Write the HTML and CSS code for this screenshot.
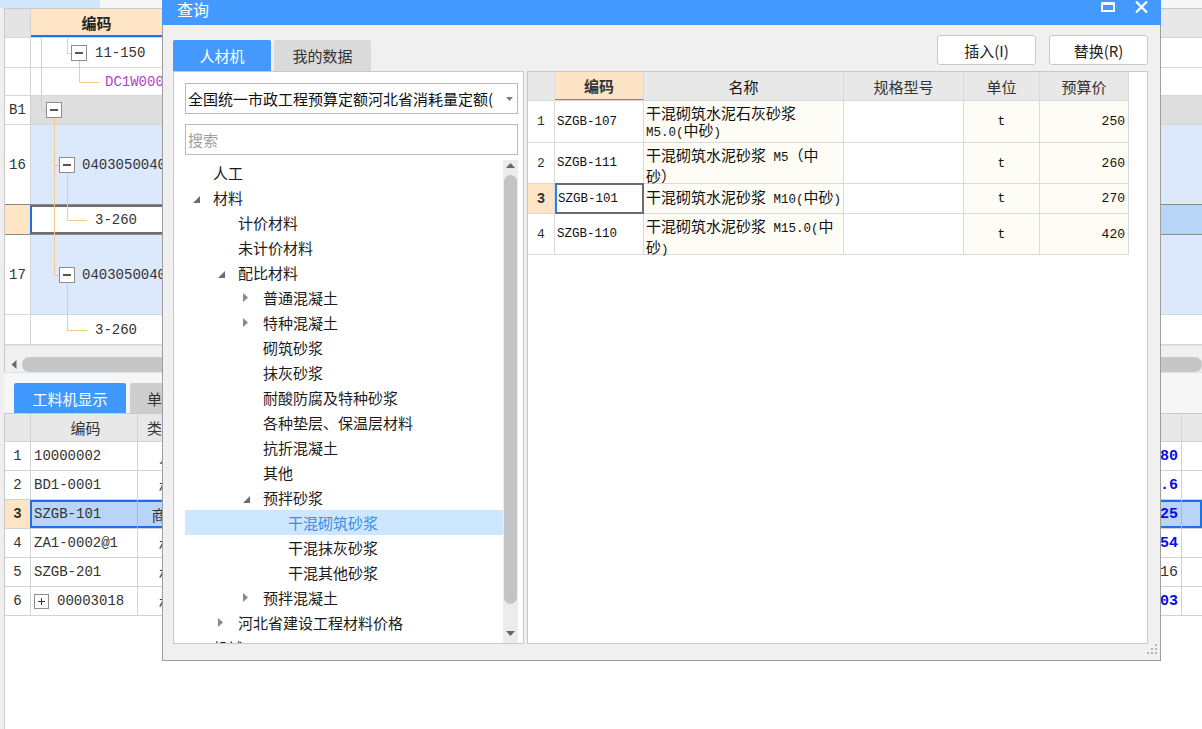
FILE: index.html
```html
<!DOCTYPE html>
<html lang="zh-CN">
<head>
<meta charset="utf-8">
<title>查询</title>
<link rel="stylesheet" href="styles.css">
</head>
<body>
<div class="app">
  <div class="topstrip"><div class="tt"></div></div>
  <div class="g1">
    <div class="r hd"><div class="rn"></div><div class="c"><div class="hcode">编码</div></div></div>
    <div class="r h30"><div class="rn"></div><div class="c p40"><span class="bx"></span><span class="tx">11-150</span></div></div>
    <div class="r h28"><div class="rn"></div><div class="c p74"><span class="tx pur">DC1W0001</span></div></div>
    <div class="r h29 grey"><div class="rn">B1</div><div class="c p15"><span class="bx"></span></div></div>
    <div class="r h80 blue"><div class="rn">16</div><div class="c p28"><span class="bx"></span><span class="tx t7">040305004001</span></div></div>
    <div class="r h30 sel"><div class="rn"></div><div class="c"><div class="cur"><span class="tx">3-260</span></div></div></div>
    <div class="r h80 blue"><div class="rn">17</div><div class="c p28"><span class="bx"></span><span class="tx t7">040305004002</span></div></div>
    <div class="r h30"><div class="rn"></div><div class="c p64"><span class="tx">3-260</span></div></div>
    <svg class="lines" width="200" height="340" viewBox="0 0 200 340">
      <path d="M37.5 30V102.5H42M63.5 30V45.5H67M75.5 53V74.5H95M50.5 110V267.5M50.5 157.5H55M50.5 267.5H55M63.5 165V212.5H83M63.5 275V322.5H83" fill="none" stroke="#fbc987" stroke-width="1"/>
    </svg>
  </div>
  <div class="hs">
    <span class="harr"><svg width="6" height="9" viewBox="0 0 6 9"><path d="M5.5 0L0.5 4.5L5.5 9Z" fill="#6a6a6a"/></svg></span>
    <span class="thumb"></span>
  </div>
  <div class="tabs2"><div class="t2 on">工料机显示</div><div class="t2">单价构成</div></div>
  <div class="g2">
    <div class="r2 hd2"><div class="rn"></div><div class="cells"><div class="k code cen">编码</div><div class="k typ hl">类别</div><div class="k fill"></div><div class="k num"></div><div class="k last"></div></div></div>
    <div class="r2"><div class="rn">1</div><div class="cells"><div class="k code">10000002</div><div class="k typ">人</div><div class="k fill"></div><div class="k num bl">114.80</div><div class="k last"></div></div></div>
    <div class="r2"><div class="rn">2</div><div class="cells"><div class="k code">BD1-0001</div><div class="k typ">材</div><div class="k fill"></div><div class="k num bl">33.6</div><div class="k last"></div></div></div>
    <div class="r2 s2"><div class="rn">3</div><div class="cells"><div class="k code">SZGB-101</div><div class="k typ">商砼</div><div class="k fill"></div><div class="k num bl">270.25</div><div class="k last"></div></div></div>
    <div class="r2"><div class="rn">4</div><div class="cells"><div class="k code">ZA1-0002@1</div><div class="k typ">材</div><div class="k fill"></div><div class="k num bl">1.54</div><div class="k last"></div></div></div>
    <div class="r2"><div class="rn">5</div><div class="cells"><div class="k code">SZGB-201</div><div class="k typ">材</div><div class="k fill"></div><div class="k num">0.16</div><div class="k last"></div></div></div>
    <div class="r2"><div class="rn">6</div><div class="cells"><div class="k code"><span class="bx plus"></span><span class="tx t9">00003018</span></div><div class="k typ">材</div><div class="k fill"></div><div class="k num bl">12.03</div><div class="k last"></div></div></div>
  </div>
  <div class="rest"></div>
</div>

<div class="dlg">
  <div class="dtitle">
    <span class="dtxt">查询</span>
    <span class="dctl">
      <svg class="imax" width="14" height="10" viewBox="0 0 14 10"><rect x="1" y="1.5" width="12" height="7.5" fill="none" stroke="#fff" stroke-width="2"/><rect x="1" y="0" width="12" height="3" fill="#fff"/></svg>
      <svg class="iclose" width="13" height="12" viewBox="0 0 13 12"><path d="M1 0.5L12 11.5M12 0.5L1 11.5" stroke="#fff" stroke-width="2.2"/></svg>
    </span>
  </div>
  <div class="dtop">
    <div class="dtabs"><div class="dtab on">人材机</div><div class="dtab">我的数据</div></div>
    <div class="dbtns"><button class="btn">插入(I)</button><button class="btn">替换(R)</button></div>
  </div>
  <div class="panes">
    <div class="lp">
      <div class="combo"><span class="ctext">全国统一市政工程预算定额河北省消耗量定额(</span><svg class="caret" width="7" height="4" viewBox="0 0 7 4"><path d="M0 0H7L3.5 4Z" fill="#7a7a7a"/></svg></div>
      <div class="search">搜索</div>
      <div class="tw">
        <div class="tree">
          <div class="ti l0"><i class="ar"></i><span>人工</span></div>
          <div class="ti l0"><i class="ar"><svg class="ex" width="7" height="7" viewBox="0 0 7 7"><path d="M7 0V7H0Z" fill="#6d6d6d"/></svg></i><span>材料</span></div>
          <div class="ti l1"><i class="ar"></i><span>计价材料</span></div>
          <div class="ti l1"><i class="ar"></i><span>未计价材料</span></div>
          <div class="ti l1"><i class="ar"><svg class="ex" width="7" height="7" viewBox="0 0 7 7"><path d="M7 0V7H0Z" fill="#6d6d6d"/></svg></i><span>配比材料</span></div>
          <div class="ti l2"><i class="ar"><svg width="5" height="9" viewBox="0 0 5 9"><path d="M0 0L5 4.5L0 9Z" fill="#8a8a8a"/></svg></i><span>普通混凝土</span></div>
          <div class="ti l2"><i class="ar"><svg width="5" height="9" viewBox="0 0 5 9"><path d="M0 0L5 4.5L0 9Z" fill="#8a8a8a"/></svg></i><span>特种混凝土</span></div>
          <div class="ti l2"><i class="ar"></i><span>砌筑砂浆</span></div>
          <div class="ti l2"><i class="ar"></i><span>抹灰砂浆</span></div>
          <div class="ti l2"><i class="ar"></i><span>耐酸防腐及特种砂浆</span></div>
          <div class="ti l2"><i class="ar"></i><span>各种垫层、保温层材料</span></div>
          <div class="ti l2"><i class="ar"></i><span>抗折混凝土</span></div>
          <div class="ti l2"><i class="ar"></i><span>其他</span></div>
          <div class="ti l2"><i class="ar"><svg class="ex" width="7" height="7" viewBox="0 0 7 7"><path d="M7 0V7H0Z" fill="#6d6d6d"/></svg></i><span>预拌砂浆</span></div>
          <div class="ti l3 on"><i class="ar"></i><span>干混砌筑砂浆</span></div>
          <div class="ti l3"><i class="ar"></i><span>干混抹灰砂浆</span></div>
          <div class="ti l3"><i class="ar"></i><span>干混其他砂浆</span></div>
          <div class="ti l2"><i class="ar"><svg width="5" height="9" viewBox="0 0 5 9"><path d="M0 0L5 4.5L0 9Z" fill="#8a8a8a"/></svg></i><span>预拌混凝土</span></div>
          <div class="ti l1"><i class="ar"><svg width="5" height="9" viewBox="0 0 5 9"><path d="M0 0L5 4.5L0 9Z" fill="#8a8a8a"/></svg></i><span>河北省建设工程材料价格</span></div>
          <div class="ti l0"><i class="ar"><svg width="5" height="9" viewBox="0 0 5 9"><path d="M0 0L5 4.5L0 9Z" fill="#8a8a8a"/></svg></i><span>机械</span></div>
        </div>
        <div class="vs">
          <svg class="vup" width="9" height="5" viewBox="0 0 9 5"><path d="M0 5H9L4.5 0Z" fill="#666"/></svg>
          <div class="vthumb"></div>
          <svg class="vdn" width="9" height="5" viewBox="0 0 9 5"><path d="M0 0H9L4.5 5Z" fill="#666"/></svg>
        </div>
      </div>
    </div>
    <div class="rp">
      <div class="tbl">
        <div class="tr th"><div class="td rn"></div><div class="td cd hk">编码</div><div class="td nm cen">名称</div><div class="td sp">规格型号</div><div class="td un">单位</div><div class="td pr">预算价</div></div>
        <div class="tr h42"><div class="td rn">1</div><div class="td cd">SZGB-107</div><div class="td nm">干混砌筑水泥石灰砂浆<br><span class="m">M5.0(</span>中砂<span class="m">)</span></div><div class="td sp"></div><div class="td un">t</div><div class="td pr">250</div></div>
        <div class="tr h41"><div class="td rn">2</div><div class="td cd">SZGB-111</div><div class="td nm">干混砌筑水泥砂浆<span class="m"> M5</span>（中<br>砂）</div><div class="td sp"></div><div class="td un">t</div><div class="td pr">260</div></div>
        <div class="tr h30 cur3"><div class="td rn">3</div><div class="td cd selc">SZGB-101</div><div class="td nm">干混砌筑水泥砂浆<span class="m"> M10(</span>中砂<span class="m">)</span></div><div class="td sp"></div><div class="td un">t</div><div class="td pr">270</div></div>
        <div class="tr h41"><div class="td rn">4</div><div class="td cd">SZGB-110</div><div class="td nm">干混砌筑水泥砂浆<span class="m"> M15.0(</span>中<br>砂<span class="m">)</span></div><div class="td sp"></div><div class="td un">t</div><div class="td pr">420</div></div>
      </div>
    </div>
  </div>
  <div class="dfoot">
    <svg width="10" height="10" viewBox="0 0 10 10"><g fill="#b2b2b2"><rect x="8" y="0" width="2" height="2"/><rect x="4" y="4" width="2" height="2"/><rect x="8" y="4" width="2" height="2"/><rect x="0" y="8" width="2" height="2"/><rect x="4" y="8" width="2" height="2"/><rect x="8" y="8" width="2" height="2"/></g></svg>
  </div>
</div>
</body>
</html>
```

FILE: styles.css
```css
* { box-sizing: border-box; margin: 0; padding: 0; }
html, body { width: 1202px; height: 729px; overflow: hidden; }
body {
  background: #fff;
  font-family: "Noto Sans CJK SC", "Noto Sans", sans-serif;
  font-size: 15px;
  color: #222;
  position: relative;
}

/* ---------- background application ---------- */
.app {
  display: flex;
  flex-direction: column;
  height: 729px;
  padding-left: 4px;
  background: #efefef;
}
.topstrip { height: 8px; margin-left: -4px; background: #f7f7f7; display: flex; }
.topstrip .tt { width: 100px; background: #cfe6fb; }

.g1 {
  position: relative;
  background: #fff;
  border-left: 1px solid #c9c9c9;
  border-top: 1px solid #c9c9c9;
}
.r { display: flex; border-bottom: 1px solid #d6d6d6; }
.rn {
  width: 26px;
  flex: none;
  border-right: 1px solid #d2d2d2;
  display: flex;
  align-items: center;
  justify-content: center;
  font-family: "Liberation Mono", monospace;
  font-size: 14px;
  color: #333;
  background: #fff;
}
.r .c { flex: 1; display: flex; align-items: center; min-width: 0; }
.hd { height: 29px; background: #e6e6e6; }
.hd .rn { background: #e4e4e4; }
.hd .c { align-items: stretch; background: #e8e8e8; }
.hcode {
  width: 131px;
  background: #fde5c6;
  border-bottom: 2px solid #1a73e8;
  display: flex;
  align-items: center;
  justify-content: center;
  font-weight: bold;
  font-size: 15px;
  color: #222;
}
.h30 { height: 30px; }
.h28 { height: 28px; }
.h29 { height: 29px; }
.h80 { height: 80px; }
.grey .c { background: #dedede; }
.blue .c { background: #dce8fb; }
.sel { border-top: 1px solid #8a8a8a; border-bottom: 1px solid #8a8a8a; margin-top: -1px; height: 31px; }
.sel .rn { background: #fde5c5; }
.sel .c { background: #b7d6f7; align-items: stretch; }
.cur {
  width: 300px;
  margin-left: -1px;
  background: #fff;
  border: 2px solid #6e6e6e;
  border-left: 2px solid #1a6fe0;
  display: flex;
  align-items: center;
  padding-left: 63px;
}
.p40 { padding-left: 40px; }
.p74 { padding-left: 74px; }
.p15 { padding-left: 15px; }
.p28 { padding-left: 28px; }
.p64 { padding-left: 64px; }
.bx {
  width: 16px;
  height: 16px;
  flex: none;
  border: 1px solid #8e8e8e;
  background: #fff;
  position: relative;
  display: inline-block;
}
.bx::before {
  content: "";
  position: absolute;
  left: 3px;
  top: 6px;
  width: 8px;
  height: 2px;
  background: #555;
}
.bx.plus { width: 15px; height: 15px; }
.bx.plus::before { left: 3px; top: 6px; width: 7px; height: 1px; background: #333; }
.bx.plus::after {
  content: "";
  position: absolute;
  left: 6px;
  top: 3px;
  width: 1px;
  height: 7px;
  background: #333;
}
.tx {
  margin-left: 8px;
  font-family: "Liberation Mono", monospace;
  font-size: 14px;
  color: #333;
  white-space: nowrap;
}
.p74 .tx, .cur .tx, .p64 .tx { margin-left: 0; }
.tx.t7 { margin-left: 7px; }
.tx.t9 { margin-left: 8px; }
.pur { color: #b23fc6; }
.lines { position: absolute; left: -1px; top: -1px; pointer-events: none; }

.hs {
  height: 27px;
  background: #f0f0f0;
  border-left: 1px solid #c9c9c9;
  border-top: 1px solid #e2e2e2;
  padding-top: 11px;
  display: flex;
}
.harr { width: 17px; height: 15px; display: flex; align-items: center; justify-content: center; }
.thumb { flex: 1; height: 15px; background: #c6c6c6; border-radius: 7px; }

.tabs2 {
  height: 41px;
  background: #f6f6f6;
  padding: 10px 0 0 10px;
  display: flex;
  gap: 4px;
  border-top: 1px solid #e0e0e0;
}
.t2 {
  width: 94px;
  height: 30px;
  background: #cdcdcd;
  border-radius: 2px 2px 0 0;
  display: flex;
  align-items: center;
  justify-content: center;
  font-size: 15px;
  color: #333;
}
.t2.on { width: 112px; background: #3f98fd; color: #fff; }

.g2 { background: #fff; border-left: 1px solid #c9c9c9; border-top: 1px solid #c9c9c9; }
.r2 { display: flex; height: 29px; border-bottom: 1px solid #d2d2d2; }
.hd2 { height: 28px; background: #e8e8e8; }
.hd2 .rn { background: #e8e8e8; }
.cells { flex: 1; display: flex; min-width: 0; }
.k {
  border-right: 1px solid #d2d2d2;
  display: flex;
  align-items: center;
  font-family: "Liberation Mono", "Noto Sans CJK SC", monospace;
  font-size: 14px;
  color: #333;
  white-space: nowrap;
  overflow: hidden;
}
.hd2 .k { font-family: "Noto Sans CJK SC", sans-serif; font-size: 15px; justify-content: center; }
.k.code { width: 107px; flex: none; padding-left: 3px; }
.k.code .tx { margin-left: 8px; }
.k.typ {
  width: 58px;
  flex: none;
  justify-content: center;
  font-family: "Noto Sans CJK SC", sans-serif;
  font-size: 15px;
}
.hd2 .k.typ.hl { justify-content: flex-start; padding-left: 9px; }
.k.fill { flex: 1; }
.k.num { width: 60px; flex: none; justify-content: flex-end; padding-right: 3px; font-size: 15px; }
.k.num.bl { color: #0b0be8; font-weight: bold; }
.k.last { width: 20px; flex: none; border-right: none; }
.s2 .rn { background: #fde5c5; font-weight: bold; }
.s2 .cells {
  background: #b6d5f7;
  margin-left: -1px;
  box-shadow: inset 0 0 0 2px #1f6fe5;
  padding-left: 1px;
}
.s2 .k { border-right-color: #9fb9d6; }
.rest { flex: 1; background: #fff; border-left: 1px solid #d0d0d0; }

/* ---------- dialog ---------- */
.dlg {
  position: absolute;
  left: 162px;
  top: 0;
  width: 999px;
  height: 661px;
  background: #f0f0f0;
  border: 1px solid #9e9e9e;
  border-top: none;
  display: flex;
  flex-direction: column;
}
.dtitle {
  height: 25px;
  margin: 0 -1px;
  background: #4499ff;
  color: #fff;
  display: flex;
  align-items: flex-start;
  padding: 0 13px 0 15px;
}
.dtxt { font-size: 16px; line-height: 18px; }
.dctl { margin-left: auto; display: flex; align-items: flex-start; gap: 20px; padding-top: 1px; }
.imax { margin-top: 1px; }

.dtop {
  height: 46px;
  padding: 0 12px 0 10px;
  display: flex;
  justify-content: space-between;
}
.dtabs { align-self: flex-end; display: flex; gap: 3px; }
.dtab {
  width: 98px;
  height: 31px;
  background: #dadada;
  border-radius: 2px 2px 0 0;
  display: flex;
  align-items: center;
  justify-content: center;
  font-size: 15px;
  color: #333;
}
.dtab + .dtab { width: 97px; }
.dtab.on { background: #4499ff; color: #fff; }
.dbtns { margin-top: 10px; display: flex; gap: 13px; }
.btn {
  width: 99px;
  height: 30px;
  background: #fff;
  border: 1px solid #c9c9c9;
  border-radius: 3px;
  font-family: "Noto Sans CJK SC", sans-serif;
  font-size: 15px;
  color: #222;
}

.panes { height: 573px; display: flex; gap: 3px; padding: 0 12px 0 10px; }
.lp {
  width: 351px;
  flex: none;
  background: #fff;
  border: 1px solid #c9c9c9;
  padding: 11px 5px 0 11px;
  display: flex;
  flex-direction: column;
}
.combo {
  height: 31px;
  flex: none;
  border: 1px solid #b9b9b9;
  background: #fff;
  display: flex;
  align-items: center;
  padding-left: 2px;
}
.ctext { width: 308px; overflow: hidden; white-space: nowrap; font-size: 15px; color: #111; }
.caret { margin-left: 10px; }
.search {
  height: 31px;
  flex: none;
  margin-top: 10px;
  border: 1px solid #b9b9b9;
  display: flex;
  align-items: center;
  padding-left: 2px;
  color: #a0a0a0;
  font-size: 15px;
}
.tw { margin-top: 5px; flex: 1; min-height: 0; display: flex; overflow: hidden; }
.tree { flex: 1; overflow: hidden; }
.ti {
  height: 25px;
  display: flex;
  align-items: center;
  white-space: nowrap;
  font-size: 15px;
  color: #1c1c1c;
}
.ti .ar { width: 22px; flex: none; display: flex; align-items: center; padding-left: 2px; font-style: normal; }
.ti .ar .ex { margin-top: 4px; }
.l0 { padding-left: 6px; }
.l1 { padding-left: 31px; }
.l2 { padding-left: 56px; }
.l3 { padding-left: 81px; }
.ti.on { background: #cce7ff; color: #3a8ce6; }
.vs {
  width: 15px;
  flex: none;
  background: #ececec;
  display: flex;
  flex-direction: column;
  align-items: center;
}
.vup { margin-top: 3px; flex: none; }
.vthumb { width: 13px; flex: none; height: 429px; margin-top: 7px; background: #c3c3c3; border-radius: 7px; }
.vdn { margin-top: 27px; flex: none; }

.rp { flex: 1; background: #fff; border: 1px solid #c9c9c9; }
.tbl { width: 601px; }
.tr { display: flex; border-bottom: 1px solid #dadada; }
.th { height: 29px; background: #e8e8e8; }
.h42 { height: 42px; }
.h41 { height: 41px; }
.tr.h30 { height: 30px; }
.td {
  border-right: 1px solid #dadada;
  display: flex;
  align-items: center;
  justify-content: center;
  font-size: 15px;
  color: #333;
}
.td.rn {
  width: 27px;
  font-family: "Liberation Mono", monospace;
  font-size: 13px;
  background: #fff;
}
.th .td.rn { background: #e8e8e8; }
.td.cd {
  width: 89px;
  justify-content: flex-start;
  padding-left: 2px;
  font-family: "Liberation Mono", monospace;
  font-size: 12.5px;
  color: #111;
}
.th .td { font-family: "Noto Sans CJK SC", sans-serif; font-size: 15px; color: #333; justify-content: center; padding: 0; }
.td.hk { background: #fde4c4; font-weight: bold; border-bottom: 1px solid #4a90e2; }
.td.nm {
  width: 200px;
  display: block;
  align-self: stretch;
  padding: 2px 0 0 2px;
  line-height: 17px;
  background: #fdfdf6;
  color: #111;
}
.tr.h30 .td.nm { padding-top: 4px; }
.tr.h42 .td.nm { padding-top: 3px; }
.tr.h41 .td.nm { padding-top: 3px; }
.td.nm.cen { display: flex; background: #e8e8e8; padding: 0; }
.td.sp { width: 120px; }
.td.un {
  width: 76px;
  background: #fdfdf6;
  font-family: "Liberation Mono", monospace;
  font-size: 13px;
  color: #111;
}
.td.pr {
  width: 89px;
  background: #fdfdf6;
  justify-content: flex-end;
  padding-right: 3px;
  font-family: "Liberation Mono", monospace;
  font-size: 13px;
  color: #111;
}
.th .td.un, .th .td.pr { background: #e8e8e8; }
.th .td.pr { justify-content: center; padding: 0; font-family: "Noto Sans CJK SC", sans-serif; font-size: 15px; color: #333; }
.th .td.un { font-family: "Noto Sans CJK SC", sans-serif; font-size: 15px; color: #333; }
.m { font-family: "Liberation Mono", monospace; font-size: 12.5px; white-space: pre; }
.cur3 .td.rn { background: #fde5c5; font-weight: bold; font-size: 14px; }
.td.selc { border: 2px solid #6b6b6b; border-left-color: #2a7fe8; margin-top: -1px; height: 31px; padding-left: 1px; }

.dfoot { flex: 1; display: flex; justify-content: flex-end; align-items: flex-start; padding: 0 3px 0 0; }
```
